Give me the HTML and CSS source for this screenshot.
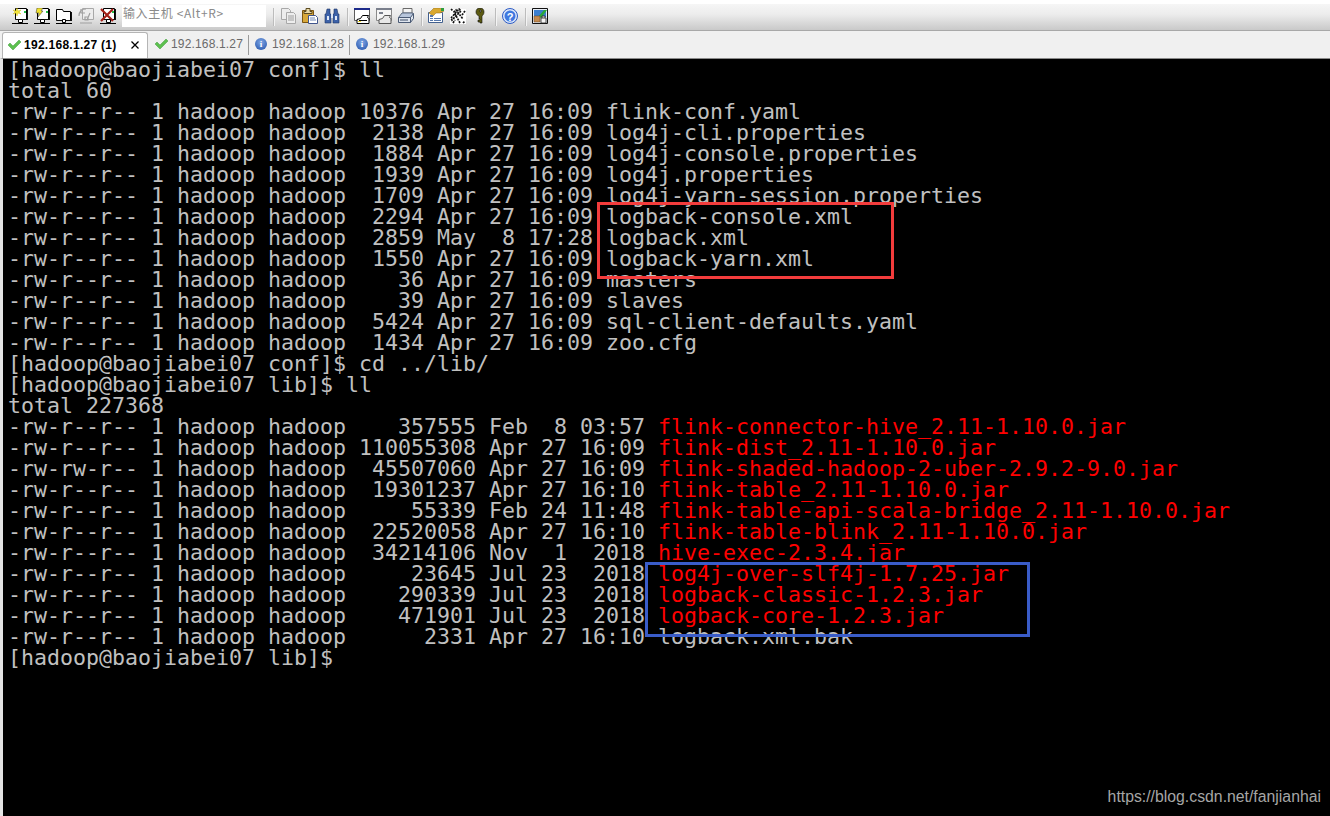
FILE: index.html
```html
<!DOCTYPE html>
<html lang="zh">
<head>
<meta charset="utf-8">
<title>Xshell</title>
<link rel="stylesheet" href="styles.css">
</head>
<body>
<div class="app">
  <div class="toolbar">
    <div class="group g1">
      <svg class="ic" viewBox="0 0 16 16"><path class="srv" d="M3.500.5h11v11h-11z"/><path class="shd" d="M15 1h1v11H4v-1h11z"/><path class="gr" d="M12 3h2v2h-2z"/><path class="yl" d="M5 0l1 3 3-1-2 2 2 2-3-1-1 3-1-3-3 1 2-2-2-2 3 1z"/><path class="con" d="M6.500 11.500h4v3h-4zM0 15.500h16"/></svg>
      <svg class="ic" viewBox="0 0 16 16"><path class="srv" d="M3.500.5h11v11h-11z"/><path class="shd" d="M15 1h1v11H4v-1h11z"/><path class="gr" d="M12 3h2v2h-2z"/><path class="yl2" d="M3 0h6L7 3h2L4 9l1-4H2z"/><path class="con" d="M6.500 11.500h4v3h-4zM0 15.500h16"/></svg>
      <svg class="ic" viewBox="0 0 16 16"><path class="srv" d="M.5 1.500h6l1 2h7v9H.5z"/><path class="shd" d="M15 4h1v9H1v-1h14z"/><path class="con" d="M6.500 11.500h3v3h-3zM0 15.500h16"/></svg>
      <svg class="ic" viewBox="0 0 16 16"><path class="dis" d="M4.500.5h11v11h-11z"/><path class="dis2" d="M1 8c0-5 3-7 7-7M3 1v4h4M12 5l-3 7M7 9h3v3H7zM2 15h12"/></svg>
      <svg class="ic" viewBox="0 0 16 16"><path class="srv" d="M3.500.5h11v11h-11z"/><path class="shd" d="M15 1h1v11H4v-1h11z"/><path class="gr" d="M12 3h2v2h-2z"/><path class="xr" d="M1 1l12 12M13 1L1 13"/><path class="con" d="M6.500 11.500h4v3h-4zM0 15.500h16"/></svg>
    </div>
    <div class="host">输入主机 &lt;Alt+R&gt;</div>
    <div class="sep"></div>
    <div class="group">
      <svg class="ic" viewBox="0 0 16 16"><path class="dis" d="M1.500.5h7l2 2v9h-9z"/><path class="dis" d="M6.500 4.500h7l2 2v9h-9z"/><path class="dis2" d="M8 8h6M8 10h6M8 12h6"/></svg>
      <svg class="ic" viewBox="0 0 16 16"><path class="cb" d="M.5 2.500h11v12H.5z"/><path class="cl" d="M4 .5h4v3h2v2H2v-2h2z"/><path class="pg" d="M6.500 7.500h7l2 2v6h-9z"/><path class="ln" d="M8 10h5M8 12h6"/></svg>
      <svg class="ic" viewBox="0 0 16 16"><path class="bn" d="M3 1h3v5h1v9H1V6h1zM10 1h3l1 5h1v9H9V6h1z"/><path class="bw" d="M7 6h2v4H7zM3 8h2v4H3zM11 8h2v4h-2z"/></svg>
    </div>
    <div class="sep"></div>
    <div class="group">
      <svg class="ic" viewBox="0 0 16 16"><path class="win" d="M.5 1.500h15v11H.5z"/><path class="nv" d="M0 0h16v2H0z"/><path class="prn" d="M6.500 10.500l2-3h6l-1 2 1.500 1v5h-12v-4z"/><path class="prw" d="M5 12h8v1H5z"/><path class="yl3" d="M4 13h3v1H4z"/></svg>
      <svg class="ic" viewBox="0 0 16 16"><path class="wing" d="M.5 1.500h15v11H.5z"/><path class="gyb" d="M0 0h16v2H0z"/><path class="gyb" d="M3 4h4v2H3z"/><path class="prg" d="M6.500 10.500l2-3h6l-1 2 1.500 1v5h-12v-4z"/></svg>
      <svg class="ic" viewBox="0 0 16 16"><path class="pp" d="M5 5V.5h9V5z"/><path class="pb" d="M.5 9.500L4 5h11v6H.5z"/><path class="pb2" d="M.5 9.500h12v5H.5zM12.500 9.500l3-4v5l-3 4z"/><path class="ln2" d="M2 12h8"/></svg>
    </div>
    <div class="sep"></div>
    <div class="group">
      <svg class="ic" viewBox="0 0 16 16"><path class="pg2" d="M.5 4.500h14v10H.5z"/><path class="gold" d="M1 5l5-5h6l4 3-4 2H8L5 8z"/><path class="gr2" d="M13 0h3v3h-3z"/><path class="bl2" d="M2 7h3v2H2zM2 10h3v1H2zM2 12h3v1H2zM6 10h7v1H6zM6 12h7v1H6z"/></svg>
      <svg class="ic" viewBox="0 0 16 16"><path class="wh" d="M0 1h16v15H0z"/><path class="tl" d="M1 10l8-9 2 2-9 9zM10 15L4 4l2-2 7 9M12 7l3-4M3 15l2-3M13 15l2-2M1 1l2 2"/></svg>
      <svg class="ic" viewBox="0 0 16 16"><path class="kk" d="M8 0c3 0 4 2 4 4 0 2-1 3-2 4v7H8v-1H6v-2h2v-1H7V8C5 7 4 6 4 4c0-2 1-4 4-4zM8 2v2h1V2z"/></svg>
    </div>
    <div class="sep"></div>
    <div class="group">
      <svg class="ic" viewBox="0 0 16 16"><circle class="hl" cx="8" cy="8" r="7.500"/><circle class="hl2" cx="8" cy="8" r="5.500"/><text class="q" x="8" y="12.500" text-anchor="middle">?</text></svg>
    </div>
    <div class="sep"></div>
    <div class="group">
      <svg class="ic" viewBox="0 0 16 16"><path class="fr" d="M.5.500h15v15H.5z"/><path class="sky" d="M2 2h12v7H2z"/><path class="gr3" d="M6 9l6-7h3L9 10z"/><path class="br" d="M2 8h6v6H2z"/><path class="lk" d="M9 10h5v5H9zM10 10V8h3v2"/></svg>
    </div>
  </div>
  <div class="tabs">
    <div class="tab active">
      <svg class="chk" viewBox="0 0 14 12"><path d="M1 6l2-2 3 3 6-6 2 2-8 8z"/></svg>
      <span class="tlabel">192.168.1.27 (1)</span>
      <svg class="cls" viewBox="0 0 8 8"><path d="M.5.500l7 7M7.500.500l-7 7"/></svg>
    </div>
    <div class="tab t2">
      <svg class="chk" viewBox="0 0 14 12"><path d="M1 6l2-2 3 3 6-6 2 2-8 8z"/></svg>
      <span>192.168.1.27</span>
    </div>
    <div class="tsep"></div>
    <div class="tab t3">
      <span class="info">i</span>
      <span>192.168.1.28</span>
    </div>
    <div class="tsep"></div>
    <div class="tab t3">
      <span class="info">i</span>
      <span>192.168.1.29</span>
    </div>
  </div>
  <div class="term">
<pre class="out">[hadoop@baojiabei07 conf]$ ll
total 60
-rw-r--r-- 1 hadoop hadoop 10376 Apr 27 16:09 flink-conf.yaml
-rw-r--r-- 1 hadoop hadoop  2138 Apr 27 16:09 log4j-cli.properties
-rw-r--r-- 1 hadoop hadoop  1884 Apr 27 16:09 log4j-console.properties
-rw-r--r-- 1 hadoop hadoop  1939 Apr 27 16:09 log4j.properties
-rw-r--r-- 1 hadoop hadoop  1709 Apr 27 16:09 log4j-yarn-session.properties
-rw-r--r-- 1 hadoop hadoop  2294 Apr 27 16:09 logback-console.xml
-rw-r--r-- 1 hadoop hadoop  2859 May  8 17:28 logback.xml
-rw-r--r-- 1 hadoop hadoop  1550 Apr 27 16:09 logback-yarn.xml
-rw-r--r-- 1 hadoop hadoop    36 Apr 27 16:09 masters
-rw-r--r-- 1 hadoop hadoop    39 Apr 27 16:09 slaves
-rw-r--r-- 1 hadoop hadoop  5424 Apr 27 16:09 sql-client-defaults.yaml
-rw-r--r-- 1 hadoop hadoop  1434 Apr 27 16:09 zoo.cfg
[hadoop@baojiabei07 conf]$ cd ../lib/
[hadoop@baojiabei07 lib]$ ll
total 227368
-rw-r--r-- 1 hadoop hadoop    357555 Feb  8 03:57 <span class="red">flink-connector-hive_2.11-1.10.0.jar</span>
-rw-r--r-- 1 hadoop hadoop 110055308 Apr 27 16:09 <span class="red">flink-dist_2.11-1.10.0.jar</span>
-rw-rw-r-- 1 hadoop hadoop  45507060 Apr 27 16:09 <span class="red">flink-shaded-hadoop-2-uber-2.9.2-9.0.jar</span>
-rw-r--r-- 1 hadoop hadoop  19301237 Apr 27 16:10 <span class="red">flink-table_2.11-1.10.0.jar</span>
-rw-r--r-- 1 hadoop hadoop     55339 Feb 24 11:48 <span class="red">flink-table-api-scala-bridge_2.11-1.10.0.jar</span>
-rw-r--r-- 1 hadoop hadoop  22520058 Apr 27 16:10 <span class="red">flink-table-blink_2.11-1.10.0.jar</span>
-rw-r--r-- 1 hadoop hadoop  34214106 Nov  1  2018 <span class="red">hive-exec-2.3.4.jar</span>
-rw-r--r-- 1 hadoop hadoop     23645 Jul 23  2018 <span class="red">log4j-over-slf4j-1.7.25.jar</span>
-rw-r--r-- 1 hadoop hadoop    290339 Jul 23  2018 <span class="red">logback-classic-1.2.3.jar</span>
-rw-r--r-- 1 hadoop hadoop    471901 Jul 23  2018 <span class="red">logback-core-1.2.3.jar</span>
-rw-r--r-- 1 hadoop hadoop      2331 Apr 27 16:10 logback.xml.bak
[hadoop@baojiabei07 lib]$</pre>
    <div class="mark box-red"></div>
    <div class="mark box-blue"></div>
    <div class="wm">https://blog.csdn.net/fanjianhai</div>
  </div>
</div>
</body>
</html>
```

FILE: styles.css
```css
* { box-sizing: border-box; }
html, body { margin: 0; height: 100%; overflow: hidden; background: #000; }
.app { width: 1330px; height: 816px; display: flex; flex-direction: column; background: #f0f0f0; }

.toolbar {
  height: 30px;
  border-top: 4px solid #fff;
  display: flex;
  align-items: center;
  padding: 0 0 3px 12px;
  background: linear-gradient(#f6f6f6 0%, #ececec 40%, #c9c9c9 100%);
}
.group { display: flex; gap: 6px; }
.g1 { width: 110px; }
.ic { width: 16px; height: 16px; flex: none; display: block; }
.host {
  width: 144px; height: 22px; background: #fff;
  font: 12px/16px "Noto Sans CJK SC", "Liberation Sans", sans-serif;
  letter-spacing: .6px;
  color: #8a8a8a; padding-left: 1px; align-self: flex-start; margin-top: 1px;
}
.sep { width: 1px; height: 18px; background: #bcbcbc; margin: 3px 6px 0 7px; box-shadow: 1px 0 0 #f4f4f4; }

.srv { fill: #fff; stroke: #000; }
.shd { fill: #111; }
.gr { fill: #26c24a; }
.yl { fill: #f5e63c; stroke: #c9b800; stroke-width: .4; }
.yl2 { fill: #f2e32e; stroke: #333; stroke-width: .5; }
.con { fill: #fff; stroke: #000; }
.dis { fill: #ededed; stroke: #a8a8a8; }
.dis2 { fill: none; stroke: #a0a0a0; stroke-width: 1.200; }
.xr { fill: none; stroke: #a32018; stroke-width: 2.200; }
.cb { fill: #d8a83a; stroke: #7a5512; }
.cl { fill: #e9d9a6; stroke: #5b4a20; }
.pg { fill: #fff; stroke: #40558c; }
.ln { stroke: #7188b6; fill: none; }
.bn { fill: #3d62a8; stroke: #1f3566; stroke-width: .6; }
.bw { fill: #dfe8f6; }
.win { fill: #fff; stroke: #5c5c5c; }
.nv { fill: #1c2a8a; }
.prn { fill: #fff; stroke: #000; }
.prw { fill: #000; }
.yl3 { fill: #f5df2e; }
.wing { fill: #f6f6f6; stroke: #8a8a8a; }
.gyb { fill: #7a7f8c; }
.prg { fill: #e8e8e8; stroke: #555; }
.pp { fill: #f4f4f4; stroke: #6a6a6a; }
.pb { fill: #b8c6dc; stroke: #5a6a82; }
.pb2 { fill: #dfe5ee; stroke: #4a5a74; }
.ln2 { stroke: #3c4c66; }
.pg2 { fill: #fff; stroke: #42608f; }
.gold { fill: #d9a82f; stroke: #8b6514; stroke-width: .5; }
.gr2 { fill: #2f9e3d; }
.bl2 { fill: #5778ab; }
.wh { fill: #fff; }
.tl { fill: none; stroke: #111; stroke-width: 1.700; stroke-dasharray: 2 1; }
.kk { fill: #5c5a12; fill-rule: evenodd; stroke: #111; stroke-width: .6; }
.hl { fill: #dbe6fa; stroke: #2d5bc4; }
.hl2 { fill: #3f78e0; }
.q { font: bold 11px "Liberation Sans", sans-serif; fill: #fff; }
.fr { fill: #e8eef6; stroke: #111; }
.sky { fill: #3c7fd0; }
.gr3 { fill: #2aa83a; }
.br { fill: #c48a50; stroke: #6b4420; stroke-width: .5; }
.lk { fill: #f4f4f4; stroke: #222; stroke-width: .8; }

.tabs {
  height: 28px;
  display: flex;
  align-items: stretch;
  padding: 1px 0 0 2px;
  border-top: 1px solid #a8a8a8;
  background: #f0f0f0;
  font: 12px/24px "Liberation Sans", Arial, sans-serif;
  color: #6a6a6a;
  letter-spacing: .16px;
}
.tab { display: flex; align-items: center; padding-bottom: 3px; }
.tab.active {
  width: 146px; background: #fff; color: #000; font-weight: bold; letter-spacing: .28px;
  border: 1px solid #b5b5b5; border-bottom: none; border-radius: 3px 3px 0 0;
  padding-left: 4px; margin-bottom: -1px;
}
.chk { width: 14px; height: 12px; fill: #5cc04e; stroke: #3f9a3a; stroke-width: .5; flex: none; margin-right: 3px; }
.tlabel { width: 107px; }
.cls { width: 8px; height: 8px; stroke: #000; stroke-width: 1.300; fill: none; flex: none; }
.t2 { padding-left: 6px; width: 100px; }
.t3 { padding-left: 6px; width: 100px; }
.tsep { width: 1px; height: 20px; margin-top: 3px; background: #9a9a9a; }
.info {
  width: 12px; height: 12px; border-radius: 50%; flex: none; margin-right: 5px;
  background: radial-gradient(circle at 50% 35%, #7fa6e4, #1f4fa8);
  color: #fff; font: bold 9px/12px "Liberation Serif", serif; text-align: center;
}

.term {
  position: relative;
  flex: 1;
  min-height: 0;
  background: #000;
  border-left: 3px solid #e4e4e4;
  border-top: 1px solid #8a8a8a;
}
.out {
  margin: 0;
  padding: 0 0 0 5px;
  font: 21.6px/21px "DejaVu Sans Mono", monospace;
  color: #c0c0c0;
}
.red { color: #f00; }
.mark { position: absolute; border: 3px solid; }
.box-red { left: 594px; top: 143px; width: 297px; height: 77px; border-color: #f33c3c; }
.box-blue { left: 642px; top: 503px; width: 385px; height: 75px; border-color: #3a5cc8; }
.wm {
  position: absolute; right: 9px; bottom: 10px;
  font: 15.800px/18px "Liberation Sans", Arial, sans-serif;
  color: #a6a6a6;
}
```
